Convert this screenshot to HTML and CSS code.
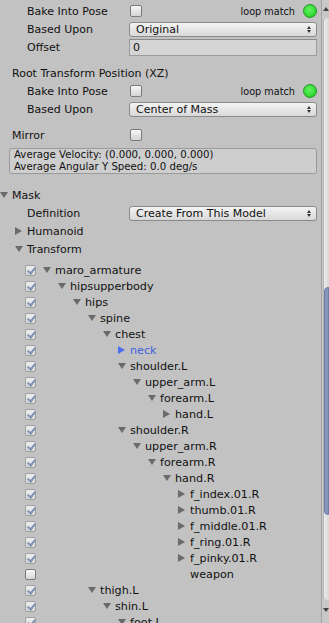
FILE: index.html
```html
<!DOCTYPE html>
<html>
<head>
<meta charset="utf-8">
<link rel="stylesheet" href="styles.css">
</head>
<body>
<div class="window">
  <div class="content">
    <div class="row ind"><span class="label">Bake Into Pose</span><span class="cb"></span><span class="fill"></span><span class="loop">loop match</span><span class="dot"></span></div>
    <div class="row ind"><span class="label">Based Upon</span><div class="popup"><span class="txt">Original</span><span class="updown"></span></div></div>
    <div class="row ind"><span class="label">Offset</span><div class="field">0</div></div>

    <div class="row hdr gap8"><span>Root Transform Position (XZ)</span></div>
    <div class="row ind"><span class="label">Bake Into Pose</span><span class="cb"></span><span class="fill"></span><span class="loop">loop match</span><span class="dot"></span></div>
    <div class="row ind"><span class="label">Based Upon</span><div class="popup"><span class="txt">Center of Mass</span><span class="updown"></span></div></div>

    <div class="row hdr gap8"><span class="label">Mirror</span><span class="cb"></span></div>
    <div class="info">
      <div>Average Velocity: (0.000, 0.000, 0.000)</div>
      <div>Average Angular Y Speed: 0.0 deg/s</div>
    </div>

    <div class="row mask"><span class="tri-d"></span><span>Mask</span></div>
    <div class="row ind"><span class="label">Definition</span><div class="popup"><span class="txt">Create From This Model</span><span class="updown"></span></div></div>
    <div class="row sub"><span class="tri-r"></span><span>Humanoid</span></div>
    <div class="row sub"><span class="tri-d"></span><span>Transform</span></div>

    <div class="tree">
      <div class="node" style="--d:0"><span class="cb on"></span><span class="tw"><span class="tri-d"></span></span><span>maro_armature</span></div>
      <div class="node" style="--d:1"><span class="cb on"></span><span class="tw"><span class="tri-d"></span></span><span>hipsupperbody</span></div>
      <div class="node" style="--d:2"><span class="cb on"></span><span class="tw"><span class="tri-d"></span></span><span>hips</span></div>
      <div class="node" style="--d:3"><span class="cb on"></span><span class="tw"><span class="tri-d"></span></span><span>spine</span></div>
      <div class="node" style="--d:4"><span class="cb on"></span><span class="tw"><span class="tri-d"></span></span><span>chest</span></div>
      <div class="node sel" style="--d:5"><span class="cb on"></span><span class="tw"><span class="tri-r"></span></span><span>neck</span></div>
      <div class="node" style="--d:5"><span class="cb on"></span><span class="tw"><span class="tri-d"></span></span><span>shoulder.L</span></div>
      <div class="node" style="--d:6"><span class="cb on"></span><span class="tw"><span class="tri-d"></span></span><span>upper_arm.L</span></div>
      <div class="node" style="--d:7"><span class="cb on"></span><span class="tw"><span class="tri-d"></span></span><span>forearm.L</span></div>
      <div class="node" style="--d:8"><span class="cb on"></span><span class="tw"><span class="tri-r"></span></span><span>hand.L</span></div>
      <div class="node" style="--d:5"><span class="cb on"></span><span class="tw"><span class="tri-d"></span></span><span>shoulder.R</span></div>
      <div class="node" style="--d:6"><span class="cb on"></span><span class="tw"><span class="tri-d"></span></span><span>upper_arm.R</span></div>
      <div class="node" style="--d:7"><span class="cb on"></span><span class="tw"><span class="tri-d"></span></span><span>forearm.R</span></div>
      <div class="node" style="--d:8"><span class="cb on"></span><span class="tw"><span class="tri-d"></span></span><span>hand.R</span></div>
      <div class="node" style="--d:9"><span class="cb on"></span><span class="tw"><span class="tri-r"></span></span><span>f_index.01.R</span></div>
      <div class="node" style="--d:9"><span class="cb on"></span><span class="tw"><span class="tri-r"></span></span><span>thumb.01.R</span></div>
      <div class="node" style="--d:9"><span class="cb on"></span><span class="tw"><span class="tri-r"></span></span><span>f_middle.01.R</span></div>
      <div class="node" style="--d:9"><span class="cb on"></span><span class="tw"><span class="tri-r"></span></span><span>f_ring.01.R</span></div>
      <div class="node" style="--d:9"><span class="cb on"></span><span class="tw"><span class="tri-r"></span></span><span>f_pinky.01.R</span></div>
      <div class="node" style="--d:9"><span class="cb"></span><span class="tw"></span><span>weapon</span></div>
      <div class="node" style="--d:3"><span class="cb on"></span><span class="tw"><span class="tri-d"></span></span><span>thigh.L</span></div>
      <div class="node" style="--d:4"><span class="cb on"></span><span class="tw"><span class="tri-d"></span></span><span>shin.L</span></div>
      <div class="node" style="--d:5"><span class="cb on"></span><span class="tw"><span class="tri-d"></span></span><span>foot.L</span></div>
    </div>
  </div>
  <div class="scroll">
    <div class="sb-up"><span class="sb-tri-up"></span></div>
    <div class="track"><div class="thumb"></div></div>
    <div class="sb-down"><span class="sb-tri-down"></span></div>
  </div>
</div>
</body>
</html>
```
FILE: styles.css
```css
* { box-sizing: border-box; }
html, body { margin: 0; padding: 0; }
body {
  background: #c2c2c2;
  font-family: "DejaVu Sans", sans-serif;
  font-size: 11px;
  color: #111;
  overflow: hidden;
  height: 623px;
}
.window { display: flex; height: 623px; }
.content { flex: 1; min-width: 0; padding: 2px 4px 0 0; }

.row { display: flex; align-items: center; height: 18px; white-space: nowrap; }
.ind { padding-left: 27px; }
.hdr { padding-left: 12px; }
.mask { padding-left: 0; margin-top: 12px; }
.sub { padding-left: 15px; }
.gap8 { margin-top: 8px; }
.label { flex: none; }
.ind .label { width: 102px; }
.hdr .label { width: 117px; }
.fill { flex: 1; }

.cb {
  flex: none;
  position: relative;
  width: 12px;
  height: 12px;
  margin-left: 1px;
  border: 1px solid #7c7c7c;
  border-radius: 2px;
  background: linear-gradient(#f8f8f8, #d4d4d4);
}
.loop { font-size: 9.7px; }
.dot {
  flex: none;
  width: 14px;
  height: 14px;
  margin-left: 8px;
  border-radius: 50%;
  border: 1px solid #249424;
  background: radial-gradient(circle at 45% 40%, #66f466, #2bd62b 70%);
}
.popup {
  flex: 1;
  height: 15px;
  display: flex;
  align-items: center;
  padding: 0 5px 0 6px;
  border: 1px solid #8a8a8a;
  border-radius: 3px;
  background: linear-gradient(#f3f3f3, #d9d9d9);
}
.popup .txt { flex: 1; }
.updown { display: flex; flex-direction: column; gap: 1px; }
.updown::before, .updown::after {
  content: "";
  width: 0;
  height: 0;
  border-left: 2.5px solid transparent;
  border-right: 2.5px solid transparent;
}
.updown::before { border-bottom: 3px solid #333; }
.updown::after { border-top: 3px solid #333; }
.field {
  flex: 1;
  height: 17px;
  display: flex;
  align-items: center;
  padding-left: 3px;
  border: 1px solid #9c9c9c;
  border-top-color: #8a8a8a;
  background: #d5d5d5;
}
.info {
  margin: 4px 0 0 9px;
  height: 26px;
  padding-left: 4px;
  display: flex;
  flex-direction: column;
  justify-content: center;
  font-size: 10.2px;
  line-height: 12px;
  border: 1px solid #9a9a9a;
  border-radius: 3px;
  background: #cecece;
}

.tri-d {
  flex: none;
  width: 0;
  height: 0;
  margin-right: 4px;
  border-left: 4px solid transparent;
  border-right: 4px solid transparent;
  border-top: 6px solid #6a6a6a;
}
.tri-r {
  flex: none;
  width: 0;
  height: 0;
  margin-right: 5px;
  border-top: 4px solid transparent;
  border-bottom: 4px solid transparent;
  border-left: 7px solid #6a6a6a;
}

.tree { margin-top: 4px; font-size: 11.2px; }
.node {
  display: flex;
  align-items: center;
  height: 16px;
  padding-left: 25px;
  white-space: nowrap;
}
.node .cb {
  width: 11px;
  height: 11px;
  margin-left: 0;
  margin-right: calc(7px + var(--d) * 15px);
}
.node .tw { flex: none; width: 12px; display: flex; align-items: center; }
.node .tw .tri-d, .node .tw .tri-r { margin-right: 0; }
.cb.on {
  border-color: #a0a0a0;
  background: linear-gradient(#eeeeee, #d6d6d6);
}
.cb.on::after {
  content: "";
  position: absolute;
  left: 3px;
  top: 0;
  width: 3px;
  height: 6px;
  border: solid #7d90b3;
  border-width: 0 2px 2px 0;
  transform: rotate(40deg);
}
.sel { color: #3f5fe0; }
.sel .tri-r { border-left-color: #4e6ff0; }

.scroll {
  flex: none;
  width: 8px;
  display: flex;
  flex-direction: column;
  border-left: 1px solid #a2a2a2;
  background: #c8c8c8;
}
.sb-up, .sb-down { display: flex; justify-content: center; align-items: center; }
.sb-up { height: 18px; }
.sb-down { height: 23px; align-items: flex-start; padding-top: 8px; }
.sb-tri-up {
  width: 0; height: 0;
  border-left: 3px solid transparent;
  border-right: 3px solid transparent;
  border-bottom: 4px solid #444;
}
.sb-tri-down {
  width: 0; height: 0;
  border-left: 3px solid transparent;
  border-right: 3px solid transparent;
  border-top: 4px solid #444;
}
.track {
  flex: 1;
  margin-left: 1px;
  border-radius: 4px 0 0 4px;
  background: linear-gradient(90deg, #ececec, #d8d8d8);
  border-left: 1px solid #b4b4b4;
}
.thumb {
  margin-top: 269px;
  height: 228px;
  border-radius: 4px 0 0 4px;
  border: 1px solid #6c7ca2;
  background: #8595b9;
}
```
